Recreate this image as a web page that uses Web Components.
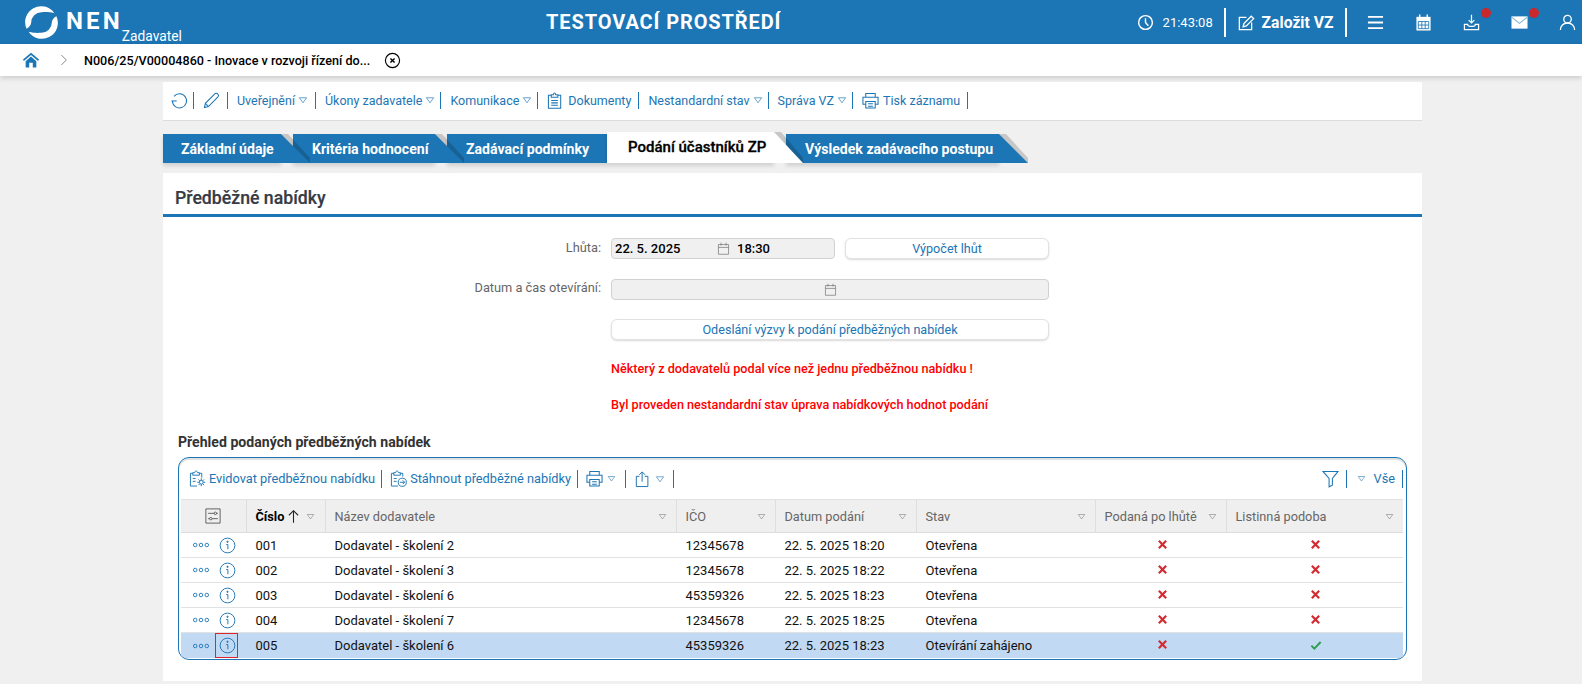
<!DOCTYPE html>
<html lang="cs"><head><meta charset="utf-8"><title>NEN</title>
<style>
html,body{margin:0;padding:0;height:684px;overflow:hidden;background:#f0f0f0;font-family:Roboto,"Liberation Sans",sans-serif;font-size:13px;color:#222}
</style></head>
<body>
<nen-topbar></nen-topbar>
<nen-crumbs></nen-crumbs>
<nen-main>
  <nen-actions></nen-actions>
  <nen-tabs></nen-tabs>
  <nen-panel heading="Předběžné nabídky">
    <nen-form></nen-form>
    <nen-offers></nen-offers>
  </nen-panel>
</nen-main>
<script>
const P={
 clock:'<circle cx="9" cy="9" r="7.3"/><path d="M9 4.5V9l3 3.5"/>',
 edit:'<path d="M10 3.5H2.5v13h13V9"/><path d="M6.5 13.5l.8-3.4L15 2.3l2.6 2.6-7.7 7.8z"/>',
 menu:'<path d="M1 3h16M1 9h16M1 15h16"/>',
 cal:'<path d="M1.500 3h15v14.500h-15z" fill="currentColor" stroke="none"/><path d="M5 .5v4M13 .5v4" /><path d="M3.500 8h11v7.500h-11zM7.200 8v7.500M10.800 8v7.500M3.500 11.700h11" stroke="#1c75b4" stroke-width=".9"/>',
 inbox:'<path d="M9 .8v8.500M6 6.500l3 3 3-3"/><path d="M5 11H1.500v5.500h15V11H13c0 1.600-1.500 2.200-4 2.200S5 12.600 5 11z"/>',
 mail:'<path d="M.5 2.500h17v13H.5z" fill="currentColor" stroke="none"/><path d="M1 3.500l8 6.500 8-6.500" stroke="#7fb2d6" stroke-width="1.100"/>',
 user:'<circle cx="9" cy="5.500" r="4"/><path d="M1.500 17c0-4.500 3-7.500 7.500-7.500s7.500 3 7.500 7.500"/>',
 home:'<path d="M9 .8L0 8.500l1 1.500L9 3.300 17 10l1-1.500z" fill="currentColor" stroke="none"/><path d="M3 10.500L9 5.200l6 5.300V17.500H11V12H7v5.500H3z" fill="currentColor" stroke="none"/>',
 chev:'<path d="M5 1.500l7.500 7.500L5 16.500"/>',
 xc:'<circle cx="9" cy="9" r="7.500"/><path d="M6.800 6.800l4.400 4.400M11.200 6.800l-4.400 4.400" stroke-width="1.500"/>',
 undo:'<path d="M3.200 4.600A7.500 7.500 0 1 1 1.500 9.500"/><path d="M.5 9.500H6"/>',
 pen:'<path d="M1.500 16.500l1-4.500L12.500 2c1-1 2.500-.8 3.300.2.800.9.800 2.100 0 3L5.800 15.400z"/><path d="M2.500 12l3.300 3.400"/>',
 clip:'<path d="M4.500 3.500h-3v13.800h13V3.500h-3"/><path d="M4.500 5.500V2.800h2.300C7 1.500 7.800 1 8 1s1 .5 1.200 1.800h2.300v2.700z"/><path d="M4.500 9h7M4.500 11.500h7M4.500 14h7"/>',
 print:'<path d="M4 5V1.500h10V5M4 13H1V5.500h16V13h-3"/><path d="M4 10h10v7H4zM6.500 12.500h5M6.500 15h5"/>',
 evid:'<path d="M4 3.500H1.500v13.500h7M11 3.500h2.500v4.500"/><path d="M4 5.500V2.800h2C6.200 1.500 7 1 7.500 1s1.300.5 1.500 1.800h2v2.700z"/><path d="M4 9h3M4 12h3"/><circle cx="13" cy="13" r="2"/><path d="M13 8.800v2M13 15.200v2M8.800 13h2M15.200 13h2M10 10l1.400 1.400M14.600 14.600L16 16M16 10l-1.400 1.400M11.400 14.600L10 16"/>',
 down:'<path d="M4 3.500H1.500v13.500h7M11 3.500h2.500v3.500"/><path d="M4 5.500V2.800h2C6.200 1.500 7 1 7.500 1s1.300.5 1.500 1.800h2v2.700z"/><path d="M4 9h3M4 12h3"/><circle cx="13" cy="13" r="4.300"/><path d="M10.500 13h5M13.500 11l2 2-2 2"/>',
 share:'<path d="M5 6H1.500v11.500h13V6H11"/><path d="M8 12V1.200M4.800 4.200L8 1l3.200 3.200"/>',
 funnel:'<path d="M1 1.500h16L11 9v7l-3.500 1.800V9z"/>',
 cog:'<path d="M1 1h16v16H1z" stroke-width="1"/><path d="M3.500 6h7M13 6h1.500M3.500 12h1.500M8 12h6.500" stroke-width="1"/><circle cx="11.700" cy="6" r="1.400" stroke-width="1"/><circle cx="6.500" cy="12" r="1.400" stroke-width="1"/>',
 up:'<path d="M9 16.500V2M3.500 7.500L9 2l5.500 5.500"/>',
 dots:'<circle cx="2.500" cy="9" r="2"/><circle cx="9" cy="9" r="2"/><circle cx="15.500" cy="9" r="2"/>',
 info:'<circle cx="9" cy="9" r="7.800"/><circle cx="9" cy="5.100" r=".7" fill="currentColor"/><path d="M7.600 8h1.800v5"/>',
 x:'<path d="M3 3l12 12M15 3L3 15" stroke-width="3.600"/>',
 ok:'<path d="M2 10l4.500 4.500L16 4.500" stroke-width="3"/>',
 tri:'<path d="M2.500 5h13L9 14z"/>',
 date:'<path d="M2 3.500h14v13.500H2zM2 7.500h14M5.500 1v4M12.500 1v4"/>'
};
class NenIcon extends HTMLElement{
 constructor(){super();this.attachShadow({mode:'open'})}
 connectedCallback(){
  const n=this.getAttribute('name'),s=this.getAttribute('size')||18,w=this.getAttribute('sw')||1.3;
  this.shadowRoot.innerHTML=`<style>:host{display:inline-flex;flex:none;line-height:0}svg{display:block;overflow:visible}</style><svg width="${s}" height="${s}" viewBox="0 0 18 18" fill="none" stroke="currentColor" stroke-width="${w}" aria-hidden="true">${P[n]}</svg>`;
 }
}
customElements.define('nen-icon',NenIcon);

const RING='M1.500 22A15.500 15.500 0 0 1 28.500 7C23 5.500 19 6 16 6A10 10 0 0 0 6 16C6 18 4 21 1.500 22z';
class NenTopbar extends HTMLElement{
 constructor(){super();this.attachShadow({mode:'open'}).innerHTML=`<style>
 :host{display:grid;grid-template-columns:546px auto 1fr;height:44px;background:#1c75b4;color:#fff;align-items:center}
 .brand{display:flex;align-items:flex-start;height:44px;padding-left:25px;box-sizing:border-box;position:relative}
 .brand svg{margin-top:6px}
 .nen{font:700 24px/24px Roboto,sans-serif;letter-spacing:3.100px;margin:9px 0 0 8px}
 .role{font:400 13.800px/16px Roboto,sans-serif;margin:28px 0 0 -1px}
 .title{font:700 20px/44px Roboto,sans-serif;letter-spacing:.9px}
 .right{display:flex;justify-content:flex-end;align-items:center;height:44px}
 .time{font:400 13px Roboto,sans-serif;margin-left:9px;width:50px}
 .div{width:2.500px;height:29px;background:#fff;flex:none}
 .new{display:flex;align-items:center;font:700 15.700px Roboto,sans-serif;padding:0 11px 0 10.500px;gap:8px}
 .ic{position:relative;display:flex}
 .ic i{position:absolute;width:10px;height:10px;border-radius:50%;background:#c9282d;left:18px;top:-6px}
 .ic+.ic{margin-left:31px}
 </style>
 <div class="brand"><svg width="33" height="33" viewBox="0 0 32 32"><path fill="#fff" d="${RING}"/><path fill="#fff" transform="rotate(180 16 16)" d="${RING}"/></svg>
  <span class="nen">NEN</span><span class="role">Zadavatel</span></div>
 <div class="title">TESTOVACÍ PROSTŘEDÍ</div>
 <div class="right">
  <nen-icon name="clock" size="17" sw="1.500"></nen-icon><span class="time">21:43:08</span>
  <span style="width:11px"></span><span class="div"></span>
  <span class="new"><nen-icon name="edit" size="17" sw="1.400"></nen-icon>Založit VZ</span><span class="div"></span>
  <span style="width:20px"></span>
  <span class="ic"><nen-icon name="menu" size="17" sw="2"></nen-icon></span>
  <span class="ic"><nen-icon name="cal" size="17" sw="1.500"></nen-icon></span>
  <span class="ic"><nen-icon name="inbox" size="17" sw="1.300"></nen-icon><i></i></span>
  <span class="ic"><nen-icon name="mail" size="17"></nen-icon><i></i></span>
  <span class="ic" style="margin-right:6px"><nen-icon name="user" size="17" sw="1.400"></nen-icon></span>
 </div>`}
}
customElements.define('nen-topbar',NenTopbar);

class NenCrumbs extends HTMLElement{
 constructor(){super();this.attachShadow({mode:'open'}).innerHTML=`<style>
 :host{display:flex;align-items:center;height:32px;background:#fff;box-shadow:0 2px 5px rgba(0,0,0,.16);color:#000;position:relative;padding-left:23px;font:500 12.600px Roboto,sans-serif}
 .h{color:#1c75b4;display:flex}.c{color:#777;margin:0 14px 0 19px;display:flex}
 .x{margin-left:14px;display:flex}
 </style><span class="h"><nen-icon name="home" size="16"></nen-icon></span><span class="c"><nen-icon name="chev" size="12" sw="1.300"></nen-icon></span><span>N006/25/V00004860 - Inovace v rozvoji řízení do...</span><span class="x"><nen-icon name="xc" size="17" sw="1.200"></nen-icon></span>`}
}
customElements.define('nen-crumbs',NenCrumbs);

class NenMain extends HTMLElement{
 constructor(){super();this.attachShadow({mode:'open'}).innerHTML=`<style>:host{display:block;margin:6px 160px 0 163px}</style><slot></slot>`}
}
customElements.define('nen-main',NenMain);

class NenActions extends HTMLElement{
 constructor(){super();
 const items=[['undo',''],['pen',''],['','Uveřejnění',1],['','Úkony zadavatele',1],['','Komunikace',1],['clip','Dokumenty'],['','Nestandardní stav',1],['','Správa VZ',1],['print','Tisk záznamu']];
 this.attachShadow({mode:'open'}).innerHTML=`<style>
 :host{display:flex;align-items:center;box-sizing:border-box;height:39px;padding-bottom:2px;background:#fff;border-bottom:1px solid #dcdcdc;color:#1c75b4;font:400 12.500px Roboto,sans-serif}
 .i{display:flex;align-items:center;height:17px;padding:0 7px 0 9px;border-right:1.500px solid #1c75b4;gap:4px;white-space:nowrap}
 .i.d{padding-right:5px;gap:3px}
 .i:first-child{padding-left:8px;padding-right:3px}
 .i:nth-child(2){padding-left:8px;padding-right:5px}
 .i:nth-child(4){padding-right:7px}
 </style>`+items.map(([ic,t,d])=>`<span class="i${d?' d':''}">${ic?`<nen-icon name="${ic}" size="17" sw="1.100"></nen-icon>`:''}${t}${d?'<nen-icon name="tri" size="10" sw="1.200"></nen-icon>':''}</span>`).join('')}
}
customElements.define('nen-actions',NenActions);

class NenTab extends HTMLElement{
 constructor(){super();this.attachShadow({mode:'open'}).innerHTML=`<style>
 :host{display:block;position:relative;height:29px;background:#1c75b4;color:#fff;box-sizing:border-box;font:700 14.100px/30px Roboto,sans-serif;white-space:nowrap;box-shadow:0 3px 4px rgba(0,0,0,.13);padding-left:var(--pl,18px);width:var(--w)}
 :host([active]){background:#fff;color:#000;height:31px;margin-top:-2px;font-size:15px;line-height:30px;font-weight:500;-webkit-text-stroke:.3px #000}
 .f{position:absolute;left:100%;top:0;width:29px;height:100%;pointer-events:none}
 </style><slot></slot><svg class="f" viewBox="0 0 29 29" preserveAspectRatio="none"><path d="M0 0L29 29H0z" fill="var(--c,#1c75b4)"/><path d="M0 0L7 0L29 24L29 29z" fill="rgba(0,0,0,.17)"/></svg>`}
}
customElements.define('nen-tab',NenTab);

class NenTabs extends HTMLElement{
 constructor(){super();
 const t=[['Základní údaje',118,3,18],['Kritéria hodnocení',142,2,19],['Zadávací podmínky',160,1,19],['Podání účastníků ZP',167,4,21],['Výsledek zadávacího postupu',213,0,19]];
 this.attachShadow({mode:'open'}).innerHTML=`<style>:host{display:flex;margin-top:13px;height:29px;gap:0}</style>`+t.map(([x,w,z,pl],i)=>`<nen-tab style="--w:${w}px;--pl:${pl}px;z-index:${z};margin-right:${i==0?12:i==1?12:i==3?12:0}px;${i==3?'--c:#fff;':''}" ${i==3?'active':''}>${x}</nen-tab>`).join('')}
}
customElements.define('nen-tabs',NenTabs);

class NenPanel extends HTMLElement{
 constructor(){super();this.attachShadow({mode:'open'}).innerHTML=`<style>
 :host{display:block;background:#fff;margin-top:10px;height:508px;box-sizing:border-box}
 h2{margin:0;height:44px;box-sizing:border-box;border-bottom:3px solid #1c75b4;padding:14px 0 0 12px;font:500 17.700px/22px Roboto,sans-serif;color:#363b45;-webkit-text-stroke:.2px #363b45}
 </style><h2>${this.getAttribute('heading')}</h2><slot></slot>`}
}
customElements.define('nen-panel',NenPanel);

class NenForm extends HTMLElement{
 constructor(){super();this.attachShadow({mode:'open'}).innerHTML=`<style>
 :host{display:grid;grid-template-columns:438px 224px 204px;column-gap:10px;row-gap:19.500px;padding-top:21px;color:#666;font:400 12.800px Roboto,sans-serif;align-items:center}
 label{text-align:right;padding-bottom:3px}
 .inp{height:21px;box-sizing:border-box;background:#f0f0f0;border:1px solid #d2d2d2;border-radius:4px;display:flex;align-items:center;color:#000;font-weight:500;font-size:13px}
 .inp .d{width:102px;padding-left:3px;box-sizing:content-box}.inp .cal{color:#777;display:flex}.inp .tm{margin-left:7px}
 .wide{grid-column:2/4;justify-content:center}
 .btn{height:21px;box-sizing:border-box;background:#fff;border:1px solid #e2e2e2;border-radius:6px;box-shadow:0 1px 2px rgba(0,0,0,.15);display:flex;align-items:center;justify-content:center;color:#1c75b4;font-size:12.600px}
 .msg{grid-column:2/4;color:#f00;font-weight:500;font-size:12.650px;line-height:16px;margin-top:1px}
 </style>
 <label>Lhůta:</label><div class="inp"><span class="d">22. 5. 2025</span><span class="cal"><nen-icon name="date" size="13" sw="1"></nen-icon></span><span class="tm">18:30</span></div><div class="btn">Výpočet lhůt</div>
 <label>Datum a čas otevírání:</label><div class="inp wide"><span class="cal"><nen-icon name="date" size="13" sw="1"></nen-icon></span></div>
 <span></span><div class="btn wide">Odeslání výzvy k podání předběžných nabídek</div>
 <span></span><div class="msg">Některý z dodavatelů podal více než jednu předběžnou nabídku !</div>
 <span></span><div class="msg">Byl proveden nestandardní stav úprava nabídkových hodnot podání</div>`}
}
customElements.define('nen-form',NenForm);

class NenOffers extends HTMLElement{
 constructor(){super();
 const cols='66px 79px 351px 99px 141px 179px 131px 176px';
 const hd=[['Číslo',1],['Název dodavatele'],['IČO'],['Datum podání'],['Stav'],['Podaná po lhůtě'],['Listinná podoba']];
 const rows=[['001','Dodavatel - školení 2','12345678','22. 5. 2025 18:20','Otevřena',0,0],['002','Dodavatel - školení 3','12345678','22. 5. 2025 18:22','Otevřena',0,0],['003','Dodavatel - školení 6','45359326','22. 5. 2025 18:23','Otevřena',0,0],['004','Dodavatel - školení 7','12345678','22. 5. 2025 18:25','Otevřena',0,0],['005','Dodavatel - školení 6','45359326','22. 5. 2025 18:23','Otevírání zahájeno',0,1]];
 const tri='<nen-icon class="tr" name="tri" size="9" sw="1.100"></nen-icon>';
 this.attachShadow({mode:'open'}).innerHTML=`<style>
 :host{display:block;margin:0 15px 0 15px;font:400 13px Roboto,sans-serif;color:#111}
 h3{margin:19px 0 5px;font:700 14.100px/20px Roboto,sans-serif;color:#333}
 .fr{border:1.500px solid #1c75b4;border-radius:11px;height:203px;box-sizing:border-box;padding:0 3px 0 1.500px;box-shadow:inset 0 2px 0 #e0e0e0;overflow:hidden}
 .bar{display:flex;align-items:center;height:41px;color:#1c75b4;padding-left:7.500px;font-size:12.750px}
 .b{display:flex;align-items:center;gap:3px;height:18px;padding:0 6px 0 1px;margin-right:7px;border-right:1.500px solid #1c75b4;white-space:nowrap}
 .sp{flex:1}
 .row{display:grid;grid-template-columns:${cols};height:25px;box-sizing:border-box;border-bottom:1.500px solid #e2e2e2;align-items:center}
 .row>div{padding:0 9px;white-space:nowrap;min-width:0}
 .hd{height:34px;background:#efefef;color:#666;border-top:1.500px solid #e2e2e2;border-bottom:1.500px solid #dcdcdc;font-size:12.750px}
 .hd>div{height:100%;display:flex;align-items:center;justify-content:space-between;border-right:1.500px solid #dedede;box-sizing:border-box}
 .hd>div:last-child{border-right:0}
 .tr{color:#777}
 .sel{background:#c2d9f4;border-bottom:0}
 .act{display:flex;align-items:center;gap:10px;color:#1c75b4;padding:0 0 0 12px!important;position:relative;height:100%}
 .box{position:absolute;left:34px;top:0;width:23px;height:25px;box-sizing:border-box;border:1px solid #e0242a}
 .row>.c{display:flex;justify-content:center;padding-left:11px;padding-bottom:2px}
 .red{color:#d22c32}.gr{color:#2f9e50}
 </style>
 <h3>Přehled podaných předběžných nabídek</h3>
 <div class="fr">
  <div class="bar">
   <span class="b"><nen-icon name="evid" size="17" sw="1"></nen-icon>Evidovat předběžnou nabídku</span>
   <span class="b"><nen-icon name="down" size="17" sw="1"></nen-icon>Stáhnout předběžné nabídky</span>
   <span class="b" style="gap:4px;padding-right:9px"><nen-icon name="print" size="17" sw="1.100"></nen-icon><nen-icon name="tri" size="9" sw="1.100"></nen-icon></span>
   <span class="b" style="gap:4px;padding-left:2px;padding-right:8px"><nen-icon name="share" size="16" sw="1.100"></nen-icon><nen-icon name="tri" size="10" sw="1.100"></nen-icon></span>
   <span class="sp"></span>
   <span class="b" style="margin-right:9px;padding-right:7px"><nen-icon name="funnel" size="17" sw="1.100"></nen-icon></span>
   <span class="b" style="margin-right:0;gap:8px;padding-right:7px"><nen-icon name="tri" size="9" sw="1.100"></nen-icon>Vše</span>
  </div>
  <div class="row hd"><div style="justify-content:center;color:#555"><nen-icon name="cog" size="16"></nen-icon></div>
   ${hd.map(([t,s])=>`<div>${s?`<b style="color:#000;font-weight:700">${t}</b><nen-icon name="up" size="15" sw="1.300" style="color:#222;margin-left:-4px"></nen-icon>`:`<span>${t}</span>`}${tri}</div>`).join('')}</div>
  ${rows.map((r,i)=>`<div class="row${i==4?' sel':''}"><div class="act"><nen-icon name="dots" size="16" sw="1"></nen-icon><nen-icon name="info" size="17" sw="1"></nen-icon>${i==4?'<span class="box"></span>':''}</div>
   <div>${r[0]}</div><div>${r[1]}</div><div>${r[2]}</div><div>${r[3]}</div><div>${r[4]}</div>
   <div class="c red"><nen-icon name="x" size="11"></nen-icon></div><div class="c ${r[6]?'gr':'red'}"><nen-icon name="${r[6]?'ok':'x'}" size="${r[6]?12:11}"></nen-icon></div></div>`).join('')}
 </div>`}
}
customElements.define('nen-offers',NenOffers);
</script>
</body></html>
